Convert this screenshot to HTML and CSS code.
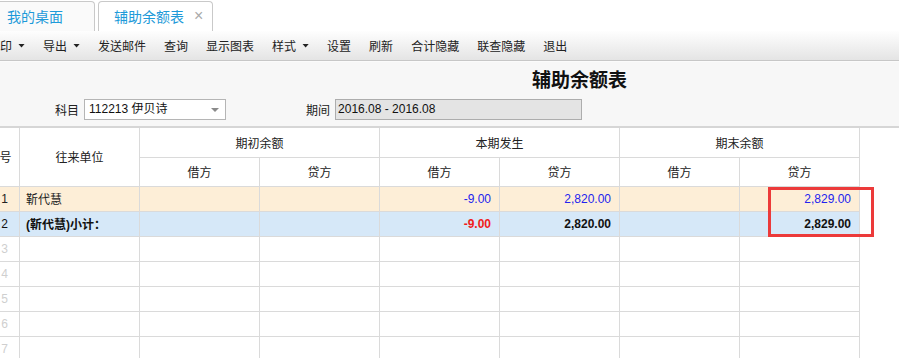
FILE: index.html
```html
<!DOCTYPE html>
<html lang="zh-CN">
<head>
    <meta charset="UTF-8">
    <meta name="viewport" content="width=device-width, initial-scale=1.0">
    <title>辅助余额表</title>
    <link rel="stylesheet" href="styles.css">
</head>
<body>
    <div class="tabs">
        <div class="tab">我的桌面</div>
        <div class="tab active">辅助余额表<span class="close">×</span></div>
    </div>

    <div class="toolbar">
        <span class="tool">打印<i class="caret"></i></span>
        <span class="tool">导出<i class="caret"></i></span>
        <span class="tool">发送邮件</span>
        <span class="tool">查询</span>
        <span class="tool">显示图表</span>
        <span class="tool">样式<i class="caret"></i></span>
        <span class="tool">设置</span>
        <span class="tool">刷新</span>
        <span class="tool">合计隐藏</span>
        <span class="tool">联查隐藏</span>
        <span class="tool">退出</span>
    </div>

    <div class="report-head">
        <h1 class="report-title">辅助余额表</h1>
        <div class="filters">
            <span class="field-label">科目</span>
            <div class="select">112213 伊贝诗<i class="select-arrow"></i></div>
            <span class="field-label period-label">期间</span>
            <div class="period">2016.08 - 2016.08</div>
        </div>
    </div>

    <div class="grid">
        <table>
            <colgroup>
                <col class="col-seq">
                <col class="col-w"><col class="col-w"><col class="col-w"><col class="col-w">
                <col class="col-w"><col class="col-w"><col class="col-w">
            </colgroup>
            <thead>
                <tr>
                    <th rowspan="2">序号</th>
                    <th rowspan="2">往来单位</th>
                    <th colspan="2">期初余额</th>
                    <th colspan="2">本期发生</th>
                    <th colspan="2">期末余额</th>
                </tr>
                <tr>
                    <th>借方</th><th>贷方</th>
                    <th>借方</th><th>贷方</th>
                    <th>借方</th><th>贷方</th>
                </tr>
            </thead>
            <tbody>
                <tr class="row-item">
                    <td class="seq">1</td>
                    <td class="name">靳代慧</td>
                    <td></td><td></td>
                    <td class="num">-9.00</td>
                    <td class="num">2,820.00</td>
                    <td></td>
                    <td class="num">2,829.00</td>
                </tr>
                <tr class="row-total">
                    <td class="seq">2</td>
                    <td class="name">(靳代慧)小计：</td>
                    <td></td><td></td>
                    <td class="num neg">-9.00</td>
                    <td class="num">2,820.00</td>
                    <td></td>
                    <td class="num">2,829.00</td>
                </tr>
                <tr class="row-empty"><td class="seq">3</td><td></td><td></td><td></td><td></td><td></td><td></td><td></td></tr>
                <tr class="row-empty"><td class="seq">4</td><td></td><td></td><td></td><td></td><td></td><td></td><td></td></tr>
                <tr class="row-empty"><td class="seq">5</td><td></td><td></td><td></td><td></td><td></td><td></td><td></td></tr>
                <tr class="row-empty"><td class="seq">6</td><td></td><td></td><td></td><td></td><td></td><td></td><td></td></tr>
                <tr class="row-empty"><td class="seq">7</td><td></td><td></td><td></td><td></td><td></td><td></td><td></td></tr>
            </tbody>
        </table>
        <div class="highlight"></div>
    </div>
</body>
</html>
```

FILE: styles.css
```css
* {
    box-sizing: border-box;
}
html, body {
    height: 100%;
}
body {
    margin: 0;
    overflow: hidden;
    background-color: #fff;
    color: #222;
    font-family: "Liberation Sans", "Noto Sans CJK SC", sans-serif;
    font-size: 12px;
}

/* tabs */
.tabs {
    display: flex;
    gap: 3px;
    height: 31px;
    padding-top: 1px;
    margin-left: -9px;
}
.tab {
    display: flex;
    align-items: center;
    height: 30px;
    padding: 0 31px 1px 15px;
    border: 1px solid #c9c9c9;
    border-bottom: 0;
    border-radius: 4px 4px 0 0;
    background-color: #fafafa;
    color: #1e9ad9;
    font-size: 14px;
}
.tab.active {
    padding-right: 9px;
    background-color: #fff;
}
.close {
    margin-left: 10px;
    color: #aaa;
    font-size: 16px;
}

/* toolbar */
.toolbar {
    display: flex;
    align-items: center;
    height: 30px;
    margin-left: -21px;
    background: linear-gradient(#fefefe, #e4e4e4);
    border-bottom: 1px solid #c7c7c7;
    color: #222;
}
.tool {
    display: flex;
    align-items: center;
    padding: 0 9px;
    height: 29px;
}
.caret {
    display: inline-block;
    width: 7px;
    height: 4px;
    margin-left: 6px;
    background-color: #222;
    clip-path: polygon(0 0, 100% 0, 50% 100%);
}

/* report header */
.report-head {
    height: 65px;
    padding-top: 7px;
    background-color: #f7f7f7;
    border-top: 1px solid #fbfbfb;
}
.report-title {
    margin: 0 0 0 532px;
    font-size: 19px;
    line-height: 24px;
    font-weight: bold;
    color: #111;
}
.filters {
    display: flex;
    align-items: center;
    margin-top: 6px;
    padding-left: 55px;
}
.field-label {
    margin-right: 5px;
    color: #222;
}
.period-label {
    margin-left: 80px;
}
.select {
    position: relative;
    width: 142px;
    height: 21px;
    padding-left: 4px;
    line-height: 19px;
    background-color: #fff;
    border: 1px solid #b5b5b5;
    color: #111;
}
.select-arrow {
    position: absolute;
    right: 6px;
    top: 8px;
    border-left: 4px solid transparent;
    border-right: 4px solid transparent;
    border-top: 4px solid #8a8a8a;
}
.period {
    width: 247px;
    height: 21px;
    padding-left: 2px;
    line-height: 19px;
    background-color: #e4e4e4;
    border: 1px solid #adadad;
    color: #111;
}

/* grid */
.grid {
    position: relative;
    border-top: 2px solid #d6d6d6;
    background-color: #fff;
}
table {
    border-collapse: collapse;
    table-layout: fixed;
    width: 880px;
    margin-left: -21px;
}
.col-seq {
    width: 40px;
}
.col-w {
    width: 120px;
}
th, td {
    padding: 0;
    border: 1px solid #dadada;
    white-space: nowrap;
    overflow: hidden;
}
th {
    height: 29px;
    font-weight: normal;
    color: #222;
    text-align: center;
}
thead tr:first-child th {
    border-top: 0;
}
td {
    height: 25px;
}
td.seq {
    text-align: right;
    padding-right: 11px;
    background-color: #fff;
    color: #222;
}
td.name {
    padding-left: 6px;
}
td.num {
    text-align: right;
    padding-right: 8px;
}
.row-item td {
    background-color: #fdeed7;
}
.row-item td.num {
    color: #2323ee;
}
.row-total td {
    background-color: #d6e8f8;
    font-weight: bold;
    color: #111;
}
.row-total td.seq {
    font-weight: normal;
}
.row-total td.neg {
    color: #f01c1c;
}
.row-empty td.seq {
    color: #cfcfcf;
}
.highlight {
    position: absolute;
    left: 768px;
    top: 59px;
    width: 106px;
    height: 50px;
    border: 3px solid #ec3a3a;
}
```
